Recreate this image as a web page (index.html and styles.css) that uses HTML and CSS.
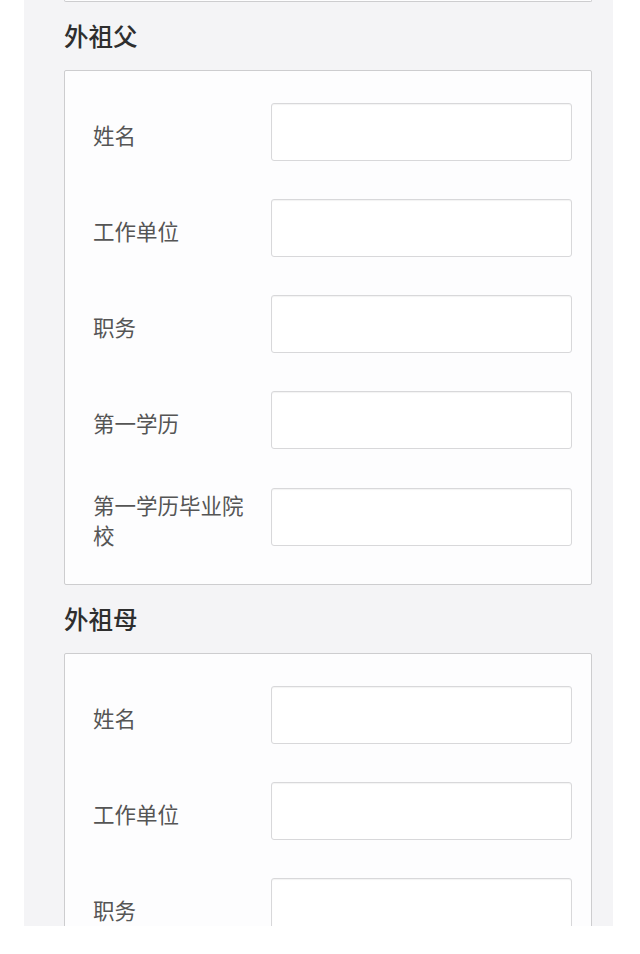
FILE: index.html
```html
<!DOCTYPE html>
<html lang="zh-CN">
<head>
    <meta charset="UTF-8">
    <meta name="viewport" content="width=device-width, initial-scale=1.0">
    <title>家庭成员信息</title>
    <link rel="stylesheet" href="styles.css">
</head>
<body>
    <div class="page">
        <div class="card card-tail"></div>

        <h2 class="section-title">外祖父</h2>
        <div class="card">
            <div class="row">
                <label class="label">姓名</label>
                <input type="text" class="field">
            </div>
            <div class="row">
                <label class="label">工作单位</label>
                <input type="text" class="field">
            </div>
            <div class="row">
                <label class="label">职务</label>
                <input type="text" class="field">
            </div>
            <div class="row">
                <label class="label">第一学历</label>
                <input type="text" class="field">
            </div>
            <div class="row">
                <label class="label">第一学历毕业院校</label>
                <input type="text" class="field">
            </div>
        </div>

        <h2 class="section-title">外祖母</h2>
        <div class="card">
            <div class="row">
                <label class="label">姓名</label>
                <input type="text" class="field">
            </div>
            <div class="row">
                <label class="label">工作单位</label>
                <input type="text" class="field">
            </div>
            <div class="row">
                <label class="label">职务</label>
                <input type="text" class="field">
            </div>
        </div>
    </div>
</body>
</html>
```

FILE: styles.css
```css
body {
    margin: 0;
    padding: 0;
    background-color: #fff;
    font-family: "Noto Sans CJK SC", "Noto Sans", sans-serif;
    color: #555;
}
.page {
    margin-left: 24px;
    width: 589px;
    height: 926px;
    overflow: hidden;
    box-sizing: border-box;
    padding: 0 21px 0 40px;
    background-color: #f4f4f6;
}
.section-title {
    margin: 0;
    height: 68px;
    line-height: 68px;
    font-size: 24.5px;
    font-weight: 500;
    color: #2e2e2e;
}
.card {
    background-color: #fdfdfe;
    border: 1px solid #cdcdcf;
    border-radius: 2px;
    padding: 32px 19px 37px 28px;
}
.card-tail {
    height: 1px;
    padding: 0;
    border-top: none;
    border-radius: 0 0 2px 2px;
}
.row {
    display: grid;
    grid-template-columns: 170px 1fr;
    column-gap: 8px;
    align-items: center;
    margin-bottom: 38px;
}
.row:last-child {
    margin-bottom: 0;
}
.label {
    padding-top: 3px;
    margin-bottom: -3px;
    font-size: 21.5px;
    line-height: 30px;
    color: #555;
}
.field {
    box-sizing: border-box;
    width: 100%;
    height: 58px;
    margin: 0;
    border: 1px solid #d8d8da;
    border-radius: 3px;
    background-color: #fff;
    box-shadow: inset 0 1px 1px rgba(0, 0, 0, 0.05);
}
```
